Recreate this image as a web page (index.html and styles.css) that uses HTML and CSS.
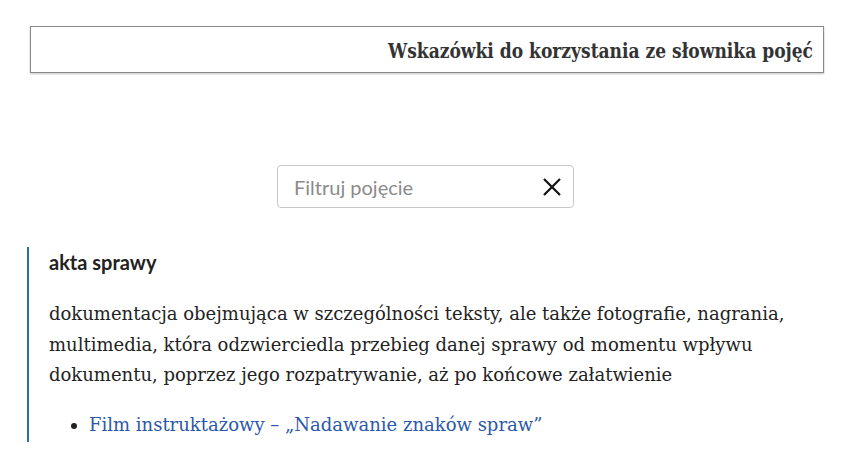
FILE: index.html
```html
<!DOCTYPE html>
<html lang="pl">
<head>
  <meta charset="UTF-8">
  <meta name="viewport" content="width=device-width, initial-scale=1.0">
  <title>Słownik pojęć</title>
  <link rel="stylesheet" href="styles.css">
</head>
<body>
  <div class="page">
    <div class="guide">
      <h2 class="guide-title">Wskazówki do korzystania ze słownika pojęć</h2>
    </div>

    <div class="filter">
      <input type="text" class="filter-input" placeholder="Filtruj pojęcie">
      <button class="filter-clear" aria-label="Wyczyść">
        <svg width="20" height="20" viewBox="0 0 20 20">
          <path d="M2 2 L18 18 M18 2 L2 18" stroke="#111" stroke-width="2.2" fill="none"/>
        </svg>
      </button>
    </div>

    <div class="term">
      <h3 class="term-name">akta sprawy</h3>
      <p class="term-def">dokumentacja obejmująca w szczególności teksty, ale także fotografie, nagrania, multimedia, która odzwierciedla przebieg danej sprawy od momentu wpływu dokumentu, poprzez jego rozpatrywanie, aż po końcowe załatwienie</p>
      <ul class="term-links">
        <li><a href="#">Film instruktażowy – „Nadawanie znaków spraw”</a></li>
      </ul>
    </div>
  </div>
</body>
</html>
```

FILE: styles.css
```css
body {
  margin: 0;
  font-family: "DejaVu Serif", serif;
  color: #222;
  background: #fff;
}
.page {
  padding: 26px 24px 0 27px;
}
.guide {
  margin-left: 3px;
  height: 45px;
  border: 1px solid #8a8a8a;
  box-shadow: 0 1px 2px rgba(0, 0, 0, 0.25);
  display: flex;
  align-items: center;
  justify-content: flex-end;
  padding-right: 10px;
}
.guide-title {
  margin: 0;
  font-family: "DejaVu Serif Condensed", "DejaVu Serif", serif;
  font-size: 19px;
  font-weight: bold;
  color: #333;
  transform: scaleY(1.12);
}
.filter {
  margin: 92px auto 0;
  width: 297px;
  height: 43px;
  box-sizing: border-box;
  border: 1px solid #c8c8c8;
  border-radius: 4px;
  display: flex;
  align-items: center;
  padding: 0 11px 0 16px;
}
.filter-input {
  flex: 1;
  border: none;
  outline: none;
  font-family: Lato, sans-serif;
  font-size: 20px;
  color: #333;
  padding: 0;
  min-width: 0;
}
.filter-input::placeholder {
  color: #8a8a8a;
}
.filter-clear {
  border: none;
  background: none;
  padding: 0;
  width: 20px;
  height: 20px;
  cursor: pointer;
}
.term {
  margin-top: 39px;
  border-left: 2px solid #2a6db0;
  padding: 3px 0 2px 20px;
}
.term-name {
  margin: 0;
  font-family: Lato, sans-serif;
  font-size: 20px;
  font-weight: bold;
  color: #222;
}
.term-def {
  margin: 25px 0 0;
  font-size: 18px;
  line-height: 30.5px;
}
.term-links {
  margin: 19px 0 0;
  padding-left: 40px;
  font-size: 18px;
  line-height: 30px;
}
.term-links a {
  color: #2b58a8;
  text-decoration: none;
}
```
